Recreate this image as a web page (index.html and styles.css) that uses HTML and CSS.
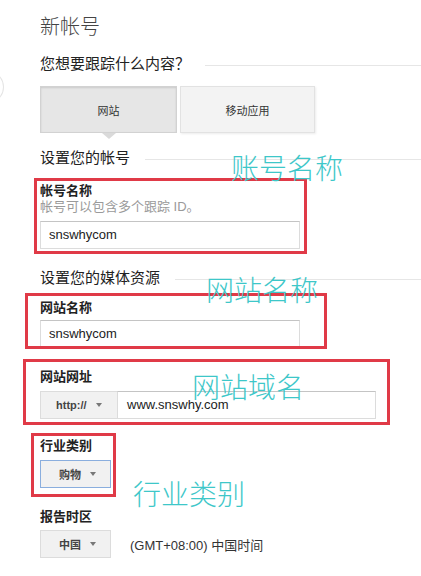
FILE: index.html
```html
<!DOCTYPE html>
<html>
<head>
  <meta charset="utf-8" />
  <title>新帐号</title>
  <link rel="stylesheet" href="styles.css">
</head>
<body>
  <div class="edge"></div>
  <div class="page">
    <h1 class="title">新帐号</h1>

    <div class="section q">
      <span>您想要跟踪什么内容？</span>
      <div class="rule"></div>
    </div>
    <div class="toggle">
      <div class="seg on">网站</div>
      <div class="seg">移动应用</div>
    </div>

    <div class="section s-account">
      <span>设置您的帐号</span>
      <div class="rule"></div>
    </div>
    <div class="label l-account">帐号名称</div>
    <div class="help">帐号可以包含多个跟踪 ID。</div>
    <div class="field f-account">snswhycom</div>

    <div class="section s-property">
      <span>设置您的媒体资源</span>
      <div class="rule"></div>
    </div>
    <div class="label l-site">网站名称</div>
    <div class="field f-site">snswhycom</div>

    <div class="label l-url">网站网址</div>
    <div class="url-row">
      <div class="select proto">http://<i class="caret"></i></div>
      <div class="field f-url">www.snswhy.com</div>
    </div>

    <div class="label l-industry">行业类别</div>
    <div class="select focus">购物<i class="caret"></i></div>

    <div class="label l-zone">报告时区</div>
    <div class="zone-row">
      <div class="select">中国<i class="caret"></i></div>
      <span class="zone-text">(GMT+08:00) 中国时间</span>
    </div>
  </div>

  <!-- annotations drawn over the screenshot -->
  <div class="mark m1"></div>
  <div class="mark m2"></div>
  <div class="mark m3"></div>
  <div class="mark m4"></div>
  <div class="note n1">账号名称</div>
  <div class="note n2">网站名称</div>
  <div class="note n3">网站域名</div>
  <div class="note n4">行业类别</div>
</body>
</html>
```

FILE: styles.css
```css
body {
  margin: 0;
  background: #fff;
  font-family: "Liberation Sans", "Noto Sans CJK SC", sans-serif;
  color: #222;
  position: relative;
  height: 576px;
  overflow: hidden;
}
.page {
  padding: 15px 0 0 40px;
}
.title {
  margin: 0;
  font-size: 20px;
  line-height: 24px;
  font-weight: 300;
  color: #444;
}
.section {
  display: flex;
  align-items: center;
  gap: 15px;
  font-size: 15px;
  line-height: 20px;
  color: #222;
}
.section .rule {
  flex: 1;
  height: 1px;
  margin-top: 2px;
  background: #e6e6e6;
}
.q {
  margin-top: 15px;
}
.s-account {
  margin-top: 15px;
}
.s-property {
  margin-top: 19px;
}
.toggle {
  display: flex;
  gap: 3px;
  width: 275px;
  height: 47px;
  margin-top: 12px;
}
.seg {
  position: relative;
  display: flex;
  align-items: center;
  justify-content: center;
  width: 135px;
  box-sizing: border-box;
  background: #f3f3f3;
  border: 1px solid #e2e2e2;
  box-shadow: 1px 1px 2px rgba(0, 0, 0, 0.08);
  font-size: 11px;
  color: #333;
}
.seg.on {
  width: 137px;
  background: #e6e6e6;
  border-color: #d2d2d2;
  box-shadow: inset 0 1px 2px rgba(0, 0, 0, 0.12);
}
.seg.on::after {
  content: "";
  position: absolute;
  left: 61px;
  bottom: -7px;
  border-top: 6px solid #dadada;
  border-left: 7px solid transparent;
  border-right: 7px solid transparent;
}
.label {
  font-size: 13px;
  line-height: 16px;
  font-weight: bold;
  color: #222;
}
.l-account {
  margin-top: 15px;
}
.l-site {
  margin-top: 12px;
}
.l-url {
  margin-top: 21px;
}
.l-industry {
  margin-top: 19px;
}
.l-zone {
  margin-top: 21px;
}
.help {
  font-size: 13px;
  line-height: 15px;
  color: #9a9a9a;
}
.field {
  box-sizing: border-box;
  width: 260px;
  height: 28px;
  padding-left: 8px;
  border: 1px solid #dcdcdc;
  border-top-color: #c4c4c4;
  font-size: 13px;
  line-height: 26px;
  color: #222;
}
.f-account {
  margin-top: 7px;
}
.f-site {
  margin-top: 4px;
}
.url-row {
  display: flex;
  width: 336px;
  margin-top: 6px;
}
.f-url {
  flex: 1;
  padding-left: 9px;
}
.select {
  display: flex;
  align-items: center;
  box-sizing: border-box;
  width: 71px;
  height: 28px;
  padding-left: 18px;
  gap: 9px;
  background: #f1f1f1;
  border: 1px solid #dcdcdc;
  font-size: 11px;
  font-weight: bold;
  color: #444;
  margin-top: 6px;
}
.select.proto {
  width: 77px;
  padding-left: 15px;
  margin-top: 0;
  border-right: none;
}
.select.focus {
  border-color: #8aaede;
}
.caret {
  width: 0;
  height: 0;
  border-top: 4px solid #777;
  border-left: 3px solid transparent;
  border-right: 3px solid transparent;
}
.zone-row {
  display: flex;
  align-items: center;
  gap: 19px;
  margin-top: -1px;
}
.zone-text {
  font-size: 13px;
  color: #333;
  margin-top: 6px;
}
.edge {
  position: absolute;
  left: -22px;
  top: 72px;
  width: 24px;
  height: 28px;
  border: 1px solid #e4e4e4;
  border-radius: 50%;
}
.mark {
  position: absolute;
  border: 3px solid #e03a47;
  box-sizing: border-box;
}
.m1 {
  left: 34px;
  top: 178px;
  width: 273px;
  height: 76px;
}
.m2 {
  left: 25px;
  top: 293px;
  width: 302px;
  height: 56px;
}
.m3 {
  left: 23px;
  top: 359px;
  width: 367px;
  height: 66px;
}
.m4 {
  left: 31px;
  top: 433px;
  width: 85px;
  height: 64px;
}
.note {
  position: absolute;
  font-family: "Noto Sans CJK SC", sans-serif;
  font-size: 28px;
  line-height: 28px;
  font-weight: 300;
  color: #3ec7c9;
  letter-spacing: 0;
}
.n1 {
  left: 231px;
  top: 153px;
}
.n2 {
  left: 206px;
  top: 275px;
}
.n3 {
  left: 192px;
  top: 372px;
}
.n4 {
  left: 133px;
  top: 479px;
}
```
